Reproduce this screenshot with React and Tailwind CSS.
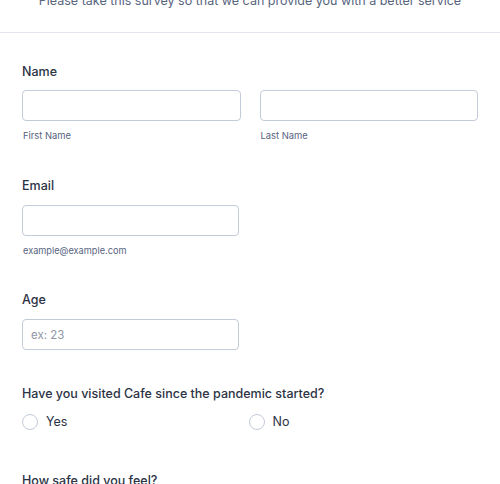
export default function App() {
  const font = { fontFamily: "Inter, 'Noto Sans', sans-serif" };
  return (
    <div className="w-[500px] h-[484px] overflow-hidden bg-white" style={font}>
      <div className="h-[33px] border-b border-[#e3e5ed] flex justify-center">
        <p className="-mt-[9px] text-[12.5px] leading-[20px] text-[#57647e]">
          Please take this survey so that we can provide you with a better service
        </p>
      </div>
      <div className="px-[22px] pt-[29px]">
        <div>
          <div className="text-[12.5px] leading-[20px] font-medium text-[#2c3345]">Name</div>
          <div className="mt-[8px] grid grid-cols-2 gap-[19px]">
            <div>
              <input className="block w-full h-[31px] rounded-[4px] border border-[#c3cad8] bg-white" />
              <div className="mt-[9px] pl-px text-[9.4px] leading-[12px] text-[#57647e]">First Name</div>
            </div>
            <div>
              <input className="block w-full h-[31px] rounded-[4px] border border-[#c3cad8] bg-white" />
              <div className="mt-[9px] pl-px text-[9.4px] leading-[12px] text-[#57647e]">Last Name</div>
            </div>
          </div>
        </div>
        <div className="mt-[34px]">
          <div className="text-[12.5px] leading-[20px] font-medium text-[#2c3345]">Email</div>
          <input className="mt-[9px] block w-[217px] h-[31px] rounded-[4px] border border-[#c3cad8] bg-white" />
          <div className="mt-[9px] pl-px text-[9.2px] leading-[12px] text-[#57647e]">example@example.com</div>
        </div>
        <div className="mt-[33px]">
          <div className="text-[12.5px] leading-[20px] font-medium text-[#2c3345]">Age</div>
          <input
            placeholder="ex: 23"
            className="mt-[9px] block w-[217px] h-[31px] rounded-[4px] border border-[#c3cad8] bg-white px-[8px] text-[11.5px] text-[#2c3345] placeholder:text-[#8f96a3]"
          />
        </div>
        <div className="mt-[34px]">
          <div className="text-[12.5px] leading-[20px] font-medium text-[#2c3345]">
            Have you visited Cafe since the pandemic started?
          </div>
          <div className="mt-[8px] grid grid-cols-2 gap-[19px]">
            <label className="flex items-center gap-[8px] h-[20px]">
              <span className="w-[16px] h-[16px] rounded-full border border-[#c3cad8] bg-white" />
              <span className="text-[12.5px] text-[#2c3345]">Yes</span>
            </label>
            <label className="flex items-center gap-[8px] h-[20px] -ml-[11px]">
              <span className="w-[16px] h-[16px] rounded-full border border-[#c3cad8] bg-white" />
              <span className="text-[12.5px] text-[#2c3345]">No</span>
            </label>
          </div>
        </div>
        <div className="mt-[39px]">
          <div className="text-[12.5px] leading-[20px] font-medium text-[#2c3345]">How safe did you feel?</div>
        </div>
      </div>
    </div>
  );
}
